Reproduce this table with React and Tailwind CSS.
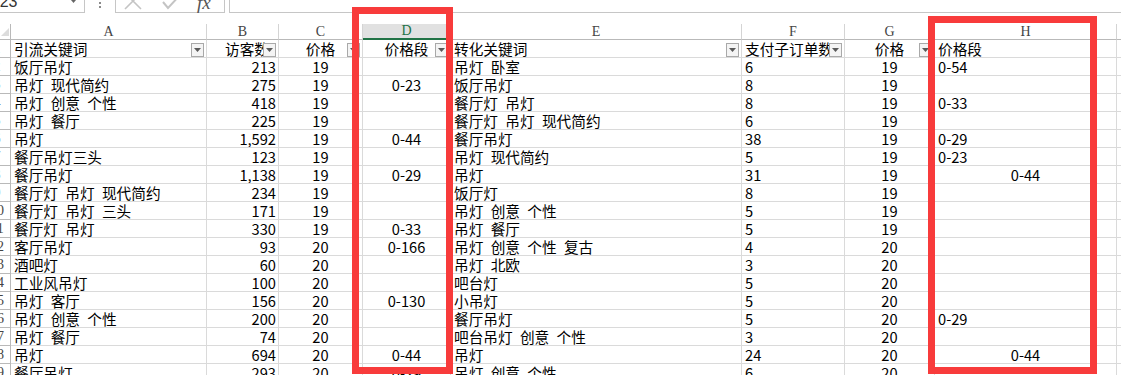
import React from 'react';

const W = {
  rh: 'w-[11px]',
  a: 'w-[196px]',
  b: 'w-[72px]',
  c: 'w-[84px]',
  d: 'w-[88px]',
  e: 'w-[291px]',
  f: 'w-[103px]',
  g: 'w-[90px]',
  h: 'w-[182px]',
};

const sp = (s) => s.replace(/ /g, '\u2002');

// 引流 side: keyword, visitors, price, price band
const leftRows = [
  ['饭厅吊灯', '213', '19', ''],
  ['吊灯 现代简约', '275', '19', '0-23'],
  ['吊灯 创意 个性', '418', '19', ''],
  ['吊灯 餐厅', '225', '19', ''],
  ['吊灯', '1,592', '19', '0-44'],
  ['餐厅吊灯三头', '123', '19', ''],
  ['餐厅吊灯', '1,138', '19', '0-29'],
  ['餐厅灯 吊灯 现代简约', '234', '19', ''],
  ['餐厅灯 吊灯 三头', '171', '19', ''],
  ['餐厅灯 吊灯', '330', '19', '0-33'],
  ['客厅吊灯', '93', '20', '0-166'],
  ['酒吧灯', '60', '20', ''],
  ['工业风吊灯', '100', '20', ''],
  ['吊灯 客厅', '156', '20', '0-130'],
  ['吊灯 创意 个性', '200', '20', ''],
  ['吊灯 餐厅', '74', '20', ''],
  ['吊灯', '694', '20', '0-44'],
  ['餐厅吊灯', '293', '20', '0-29'],
];

// 转化 side: keyword, orders, price, price band, band alignment
const rightRows = [
  ['吊灯 卧室', '6', '19', '0-54', 'left'],
  ['饭厅吊灯', '8', '19', '', 'left'],
  ['餐厅灯 吊灯', '8', '19', '0-33', 'left'],
  ['餐厅灯 吊灯 现代简约', '6', '19', '', 'left'],
  ['餐厅吊灯', '38', '19', '0-29', 'left'],
  ['吊灯 现代简约', '5', '19', '0-23', 'left'],
  ['吊灯', '31', '19', '0-44', 'center'],
  ['饭厅灯', '8', '19', '', 'left'],
  ['吊灯 创意 个性', '5', '19', '', 'left'],
  ['吊灯 餐厅', '5', '19', '', 'left'],
  ['吊灯 创意 个性 复古', '4', '20', '', 'left'],
  ['吊灯 北欧', '3', '20', '', 'left'],
  ['吧台灯', '5', '20', '', 'left'],
  ['小吊灯', '5', '20', '', 'left'],
  ['餐厅吊灯', '5', '20', '0-29', 'left'],
  ['吧台吊灯 创意 个性', '3', '20', '', 'left'],
  ['吊灯', '24', '20', '0-44', 'center'],
  ['吊灯 创意 个性', '6', '20', '', 'left'],
];

const Cell = ({ w, align = 'left', className = '', children }) => {
  const al =
    align === 'right'
      ? 'justify-end pr-[2px]'
      : align === 'center'
      ? 'justify-center'
      : 'justify-start pl-[3px]';
  return (
    <div
      className={`${w} ${al} relative h-[18px] shrink-0 flex items-center overflow-hidden whitespace-pre border-r border-b border-[#dadada] ${className}`}
    >
      {children}
    </div>
  );
};

// the sheet is scrolled a little, so only the right part of the row header shows
const RowHead = ({ n }) => (
  <div className="w-[11px] h-[18px] shrink-0 overflow-hidden border-r border-b border-[#b9b9b9] text-[#444] font-['Liberation_Serif',serif] text-[14px]">
    <div className="-ml-[18px] w-[30px] h-full flex items-center justify-center">{n}</div>
  </div>
);

const Filter = () => (
  <span className="absolute right-[2px] top-[3px] w-[13px] h-[14px] border border-[#a9a9a9] bg-[#f4f4f4] flex items-center justify-center">
    <svg width="7" height="4" viewBox="0 0 7 4">
      <path d="M0 0h7L3.5 4z" fill="#595959" />
    </svg>
  </span>
);

const Letter = ({ w, children, active }) => (
  <div
    className={`${w} h-[16px] shrink-0 flex items-center justify-center border-r border-[#d4d4d4] font-['Liberation_Serif',serif] text-[14px] leading-none ${
      active ? 'bg-[#e1e1e1] text-[#217346] border-b-2 border-b-[#217346]' : 'text-[#444] border-b border-b-[#b9b9b9]'
    }`}
  >
    {children}
  </div>
);

const FormulaBar = () => (
  <div className="flex h-[13px] items-end overflow-hidden">
    <div className="w-[85px] h-[26px] shrink-0 flex items-end justify-between pb-[2px] overflow-hidden border-r border-b border-[#c6c6c6]">
      <span className="-ml-[11px] font-['Liberation_Sans',sans-serif] text-[16px] leading-none text-[#333]">E23</span>
      <svg className="mr-[8px] mb-[7px]" width="5" height="3" viewBox="0 0 5 3">
        <path d="M0 0h5L2.5 3z" fill="#666" />
      </svg>
    </div>
    <div className="w-[30px] h-[26px] shrink-0 flex flex-col items-center justify-end gap-[2px] pb-[5px]">
      <span className="w-[2px] h-[2px] bg-[#8a8a8a]" />
      <span className="w-[2px] h-[2px] bg-[#8a8a8a]" />
      <span className="w-[2px] h-[2px] bg-[#8a8a8a]" />
    </div>
    <div className="w-[110px] h-[26px] shrink-0 flex items-end pb-[2px] border border-[#c6c6c6]">
      <svg className="ml-[8px]" width="18" height="18" viewBox="0 0 18 18">
        <path d="M1 1L17 17M17 1L1 17" stroke="#c4c4c4" strokeWidth="1.6" fill="none" />
      </svg>
      <svg className="ml-[20px]" width="20" height="16" viewBox="0 0 20 16">
        <path d="M1 8L6 14L19 0" stroke="#c4c4c4" strokeWidth="2" fill="none" />
      </svg>
      <span className="ml-[15px] font-['Liberation_Serif',serif] italic text-[19px] leading-[14px] text-[#555]">fx</span>
    </div>
    <div className="w-[4px] shrink-0" />
    <div className="flex-1 h-[26px] border-l border-b border-[#c6c6c6]" />
  </div>
);

const App = () => {
  return (
    <div className="relative w-[1121px] h-[375px] overflow-hidden bg-white text-black font-['Noto_Sans_CJK_SC',sans-serif] text-[14.67px] leading-[17px]">
      <FormulaBar />
      <div className="h-[11px]" />

      {/* column letters */}
      <div className="flex">
        <div className="w-[11px] h-[16px] shrink-0 flex items-end justify-start pl-[1px] pb-[3px] border-r border-b border-[#b9b9b9]">
          <svg width="8" height="8" viewBox="0 0 8 8">
            <path d="M8 0V8H0z" fill="#dcdcdc" />
          </svg>
        </div>
        <Letter w={W.a}>A</Letter>
        <Letter w={W.b}>B</Letter>
        <Letter w={W.c}>C</Letter>
        <Letter w={W.d} active>D</Letter>
        <Letter w={W.e}>E</Letter>
        <Letter w={W.f}>F</Letter>
        <Letter w={W.g}>G</Letter>
        <Letter w={W.h}>H</Letter>
        <div className="flex-1 h-[16px] border-b border-[#b9b9b9]" />
      </div>

      {/* table header row */}
      <div className="flex">
        <RowHead n="1" />
        <Cell w={W.a}>引流关键词<Filter /></Cell>
        <Cell w={W.b} align="right" className="pr-[9px]">访客数<Filter /></Cell>
        <Cell w={W.c} align="center">价格<Filter /></Cell>
        <Cell w={W.d} align="center">价格段<Filter /></Cell>
        <Cell w={W.e}>转化关键词<Filter /></Cell>
        <Cell w={W.f} className="pl-[2px]">支付子订单数<Filter /></Cell>
        <Cell w={W.g} align="center">价格<Filter /></Cell>
        <Cell w={W.h}>价格段</Cell>
        <div className="flex-1 h-[18px] border-b border-[#dadada]" />
      </div>

      {leftRows.map((l, i) => {
        const r = rightRows[i];
        return (
          <div key={i} className="flex">
            <RowHead n={String(i + 2)} />
            <Cell w={W.a}>{sp(l[0])}</Cell>
            <Cell w={W.b} align="right">{l[1]}</Cell>
            <Cell w={W.c} align="center">{l[2]}</Cell>
            <Cell w={W.d} align="center">{l[3]}</Cell>
            <Cell w={W.e}>{sp(r[0])}</Cell>
            <Cell w={W.f} className="pl-[2px]">{r[1]}</Cell>
            <Cell w={W.g} align="center">{r[2]}</Cell>
            <Cell w={W.h} align={r[4]}>{r[3]}</Cell>
            <div className="flex-1 h-[18px] border-b border-[#dadada]" />
          </div>
        );
      })}

      {/* red annotation boxes */}
      <div className="absolute left-[352px] top-[7px] w-[101px] h-[367px] border-[7px] border-[#f83b3b]" />
      <div className="absolute left-[928px] top-[16px] w-[169px] h-[358px] border-[7px] border-[#f83b3b]" />
    </div>
  );
};

export default App;
